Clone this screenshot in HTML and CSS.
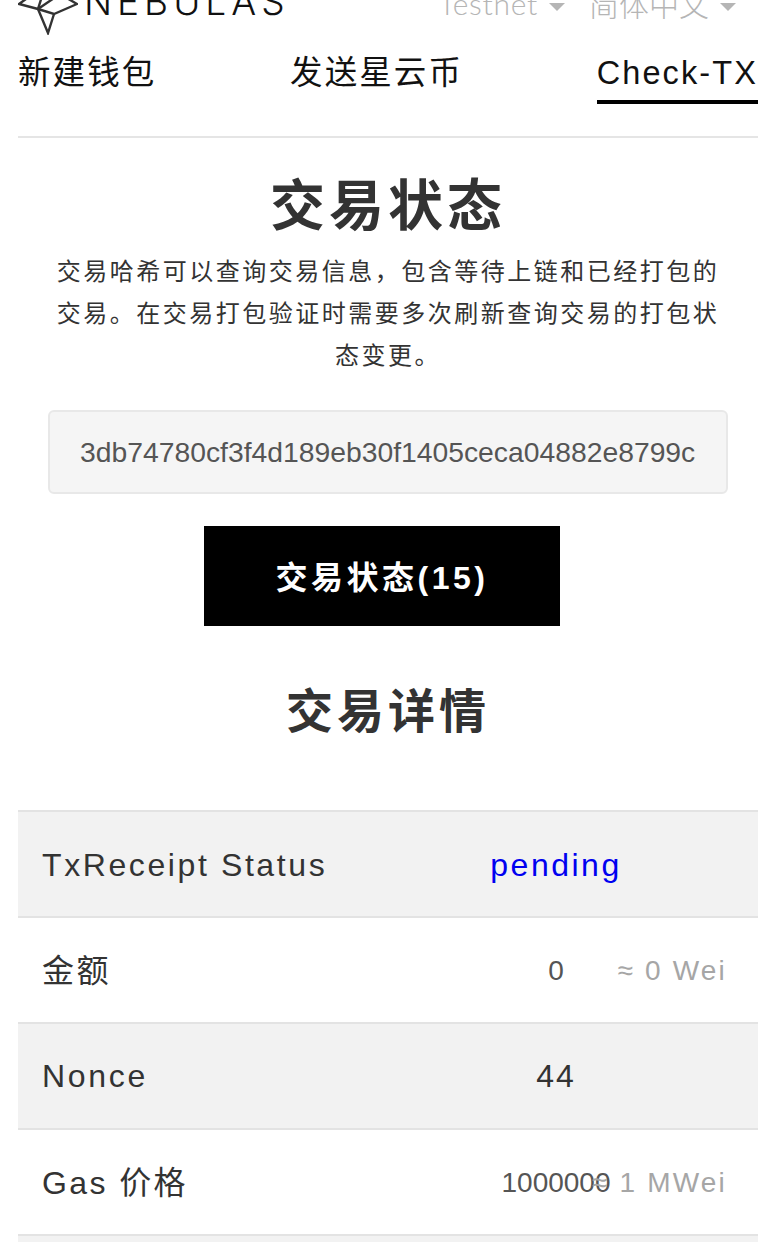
FILE: index.html
```html
<!DOCTYPE html>
<html lang="zh-CN">
  <head>
    <meta charset="UTF-8" />
    <meta name="viewport" content="width=device-width, initial-scale=1.0" />
    <title>Check-TX</title>
    <link rel="stylesheet" href="styles.css">
  </head>
  <body>
    <div class="page">
      <header class="topbar">
        <div class="brand">
          <svg class="brand-mark" viewBox="0 0 60 52" width="60" height="52" fill="none" stroke="#333" stroke-width="2.4">
            <path d="M15 11 L1 21 L20 26 L36 31 L59 21 L42 11" />
            <path d="M20 26 L30 50 L36 31" />
            <path d="M20 26 L25 10" />
            <path d="M20 26 L42 11" />
          </svg>
          <span class="brand-name">NEBULAS</span>
        </div>
        <div class="pickers">
          <span class="picker picker-net">Testnet<i class="caret"></i></span>
          <span class="picker picker-lang">简体中文<i class="caret"></i></span>
        </div>
      </header>

      <nav class="tabs">
        <a class="tab">新建钱包</a>
        <a class="tab">发送星云币</a>
        <a class="tab active">Check-TX</a>
      </nav>

      <main class="content">
        <h1>交易状态</h1>
        <p class="intro">交易哈希可以查询交易信息，包含等待上链和已经打包的交易。在交易打包验证时需要多次刷新查询交易的打包状态变更。</p>
        <div class="hash-input">3db74780cf3f4d189eb30f1405ceca04882e8799c</div>
        <button class="status-btn">交易状态(15)</button>
        <h2>交易详情</h2>

        <div class="details">
          <div class="row">
            <div class="label label-latin">TxReceipt Status</div>
            <div class="value"><span class="pending">pending</span></div>
          </div>
          <div class="row">
            <div class="label label-cjk">金额</div>
            <div class="value"><span class="num">0</span><span class="approx">≈ 0 Wei</span></div>
          </div>
          <div class="row">
            <div class="label">Nonce</div>
            <div class="value"><span class="plain">44</span></div>
          </div>
          <div class="row">
            <div class="label label-cjk">Gas 价格</div>
            <div class="value"><span class="num">1000000</span><span class="approx">≈ 1 MWei</span></div>
          </div>
          <div class="row row-cut"></div>
        </div>
      </main>
    </div>
  </body>
</html>
```

FILE: styles.css
```css
html,
body {
  margin: 0;
  padding: 0;
  height: 1242px;
  overflow: hidden;
  background-color: #fff;
}

body {
  font-family: "Liberation Sans", "Noto Sans CJK SC", sans-serif;
  color: #333;
}

.page {
  width: 740px;
  margin-left: 18px;
}

/* the shot is scrolled a little, so the top of the logo row is cut off */
.topbar {
  display: flex;
  justify-content: space-between;
  height: 68px;
  margin-top: -17px;
}

.brand {
  display: flex;
  align-items: flex-start;
}

.brand-mark {
  display: block;
}

.brand-name {
  margin-left: 6px;
  font-family: "Inter", sans-serif;
  font-weight: 300;
  font-size: 37px;
  line-height: 38px;
  letter-spacing: 5px;
  color: #111;
}

.pickers {
  display: flex;
  color: #b5b5b5;
  font-size: 30px;
  line-height: 40px;
  font-weight: 300;
}

.picker {
  display: flex;
  align-items: flex-start;
}

.picker-net {
  font-family: "Lato", sans-serif;
  letter-spacing: 0.7px;
  margin-right: 24px;
}

.picker-lang {
  font-family: "Noto Sans CJK SC", sans-serif;
  font-weight: 300;
  margin-right: 22px;
}

.caret {
  width: 0;
  height: 0;
  margin: 20px 0 0 11px;
  border-left: 8px solid transparent;
  border-right: 8px solid transparent;
  border-top: 8px solid #b5b5b5;
}

.tabs {
  display: flex;
  justify-content: space-between;
  height: 85px;
  border-bottom: 2px solid #e5e5e5;
}

.tab {
  height: 49px;
  font-size: 32.5px;
  line-height: 44px;
  letter-spacing: 2.1px;
  color: #111;
}

.tab.active {
  border-bottom: 4px solid #000;
}

.content {
  display: flex;
  flex-direction: column;
  align-items: center;
}

h1 {
  margin: 32px 0 0 0;
  font-size: 55px;
  line-height: 72px;
  letter-spacing: 4px;
  font-weight: 700;
}

.intro {
  width: 670px;
  margin: 9px 0 0 0;
  font-size: 24px;
  line-height: 42px;
  letter-spacing: 2.5px;
  text-align: center;
}

.hash-input {
  box-sizing: border-box;
  width: 680px;
  height: 84px;
  margin-top: 33px;
  padding-left: 30px;
  border: 2px solid #e8e8e8;
  border-radius: 6px;
  background-color: #f5f5f5;
  color: #555;
  font-size: 28.3px;
  line-height: 80px;
  white-space: nowrap;
  overflow: hidden;
}

.status-btn {
  display: block;
  width: 356px;
  height: 100px;
  margin: 32px 0 0 -12px;
  padding-bottom: 4px;
  border: none;
  background-color: #000;
  color: #fff;
  font-family: inherit;
  font-size: 32px;
  font-weight: 700;
  letter-spacing: 3.5px;
}

h2 {
  margin: 54px 0 0 0;
  font-size: 47px;
  line-height: 64px;
  letter-spacing: 4px;
  font-weight: 700;
}

.details {
  width: 100%;
  margin-top: 66px;
  border-top: 2px solid #e3e3e3;
}

.row {
  display: grid;
  grid-template-columns: 367px 342px;
  align-items: center;
  height: 104px;
  border-bottom: 2px solid #e3e3e3;
}

.row:nth-child(odd) {
  background-color: #f2f2f2;
}

.row-cut {
  height: 8px;
  border-bottom: none;
}

.label {
  padding-left: 24px;
  font-size: 32px;
  letter-spacing: 2.7px;
  white-space: nowrap;
}

.label-latin {
  padding-top: 2px;
  letter-spacing: 2.6px;
}

.label-cjk {
  padding-bottom: 4px;
  letter-spacing: 2.4px;
}

.value {
  display: grid;
  align-items: center;
  font-size: 32px;
}

.value > span {
  grid-area: 1 / 1;
  white-space: nowrap;
}

.pending {
  justify-self: center;
  padding-top: 2px;
  color: #0000f0;
  letter-spacing: 2.5px;
}

.plain {
  justify-self: center;
  letter-spacing: 2px;
}

.num {
  justify-self: center;
  padding-top: 2px;
  font-size: 28px;
  color: #555;
}

.approx {
  justify-self: end;
  padding-top: 2px;
  font-size: 28px;
  font-weight: 400;
  color: #a6a6a6;
  letter-spacing: 2.2px;
}
```
